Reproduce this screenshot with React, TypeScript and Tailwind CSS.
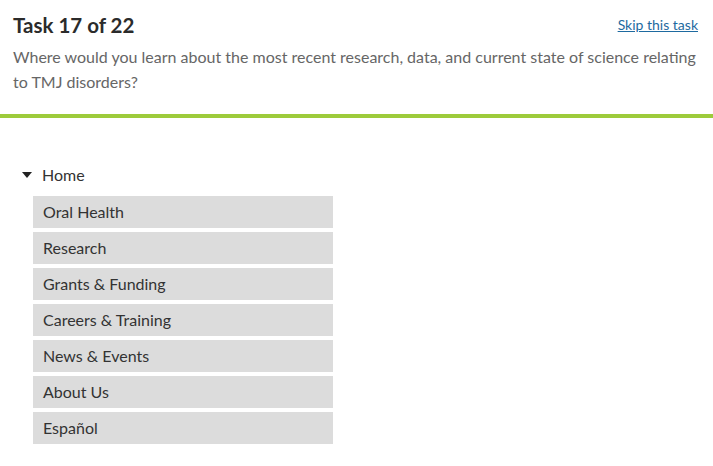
import React from "react";

const items = [
  "Oral Health",
  "Research",
  "Grants & Funding",
  "Careers & Training",
  "News & Events",
  "About Us",
  "Español",
];

export default function App() {
  return (
    <div
      className="w-[713px] h-[466px] bg-white overflow-hidden"
      style={{ fontFamily: "Lato, 'Open Sans', sans-serif" }}
    >
      <div className="border-b-4 border-[#9dcb3b] pl-[13px] pr-[15px] pt-[11px] h-[118px]">
        <div className="flex items-start justify-between">
          <h1 className="text-[20.5px] leading-[28px] font-bold text-[#2b2b2b]">Task 17 of 22</h1>
          <a className="text-[14px] leading-[20px] mt-[4px] text-[#1e6aa0] underline">Skip this task</a>
        </div>
        <p className="mt-[5px] text-[16px] leading-[25px] text-[#666]">
          Where would you learn about the most recent research, data, and current state of science relating
          to TMJ disorders?
        </p>
      </div>
      <div className="pl-[22px] pt-[45px]">
        <div className="flex items-center h-[24px] text-[16px] text-[#333]">
          <svg width="10" height="6" viewBox="0 0 10 6" className="mr-[10px]">
            <polygon points="0,0 10,0 5,6" fill="#222" />
          </svg>
          <span>Home</span>
        </div>
        <div className="ml-[11px] mt-[9px] flex flex-col gap-[4px] w-[300px]">
          {items.map((t) => (
            <div key={t} className="h-[32px] bg-[#dcdcdc] pl-[10px] flex items-center text-[16px] text-[#333]">
              {t}
            </div>
          ))}
        </div>
      </div>
    </div>
  );
}
